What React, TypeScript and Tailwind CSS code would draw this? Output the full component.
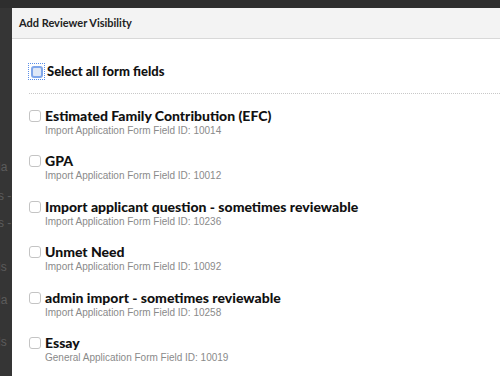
import React from "react";

const items = [
  { label: "Estimated Family Contribution (EFC)", sub: "Import Application Form Field ID: 10014" },
  { label: "GPA", sub: "Import Application Form Field ID: 10012" },
  { label: "Import applicant question - sometimes reviewable", sub: "Import Application Form Field ID: 10236" },
  { label: "Unmet Need", sub: "Import Application Form Field ID: 10092" },
  { label: "admin import - sometimes reviewable", sub: "Import Application Form Field ID: 10258" },
  { label: "Essay", sub: "General Application Form Field ID: 10019" },
];

const sideTexts = [
  { t: "la", top: 158 },
  { t: "s -", top: 187 },
  { t: "s -", top: 214 },
  { t: "ls", top: 258 },
  { t: "la", top: 291 },
  { t: "ls", top: 333 },
];

function Box({ focused }: { focused?: boolean }) {
  if (focused) {
    return (
      <span className="flex h-[15px] w-[15px] shrink-0 items-center justify-center outline-1 outline-dotted outline-[#5b8fe8]">
        <span className="h-[12px] w-[12px] rounded-[3px] border-2 border-[#7fa6ea] bg-[#dfe8f7]" />
      </span>
    );
  }
  return <span className="h-[12px] w-[12px] shrink-0 rounded-[3px] border border-[#c4c4c4] bg-white" />;
}

export default function App() {
  return (
    <div className="relative h-[376px] w-[500px] overflow-hidden bg-[#2e2e2e] [font-family:Lato,'Liberation_Sans',sans-serif]">
      <div className="absolute left-0 top-[8px] h-[368px] w-[12px] bg-[#353535]" />
      {sideTexts.map((s, i) => (
        <div
          key={i}
          className="absolute left-[-2px] text-[12px] text-[#5c5c5c] [font-family:'Liberation_Sans',sans-serif]"
          style={{ top: s.top }}
        >
          {s.t}
        </div>
      ))}
      <div className="absolute left-[12px] top-[8px] h-[368px] w-[488px] bg-white">
        <div className="flex h-[31px] items-center border-b border-[#d8d8d8] bg-[#f3f3f3] pl-[7px]">
          <span className="text-[11px] font-bold text-[#222]">Add Reviewer Visibility</span>
        </div>
        <div className="pl-[17px] pt-[23px]">
          <div className="flex items-center gap-[3px]">
            <Box focused />
            <span className="text-[13px] font-black text-[#111]">Select all form fields</span>
          </div>
          <div className="mt-[11px] border-t border-dotted border-[#c8c8c8]" />
          <div className="flex flex-col gap-[16.5px] pt-[14px]">
            {items.map((it, i) => (
              <div key={i} className="flex flex-col">
                <div className="flex items-center gap-[4px]">
                  <Box />
                  <span className="text-[14px] leading-[16px] font-black text-[#111]">{it.label}</span>
                </div>
                <span className="mt-[1px] pl-[16px] text-[10px] leading-[12px] text-[#8a8a8a] [font-family:'Liberation_Sans',sans-serif]">
                  {it.sub}
                </span>
              </div>
            ))}
          </div>
        </div>
      </div>
    </div>
  );
}
